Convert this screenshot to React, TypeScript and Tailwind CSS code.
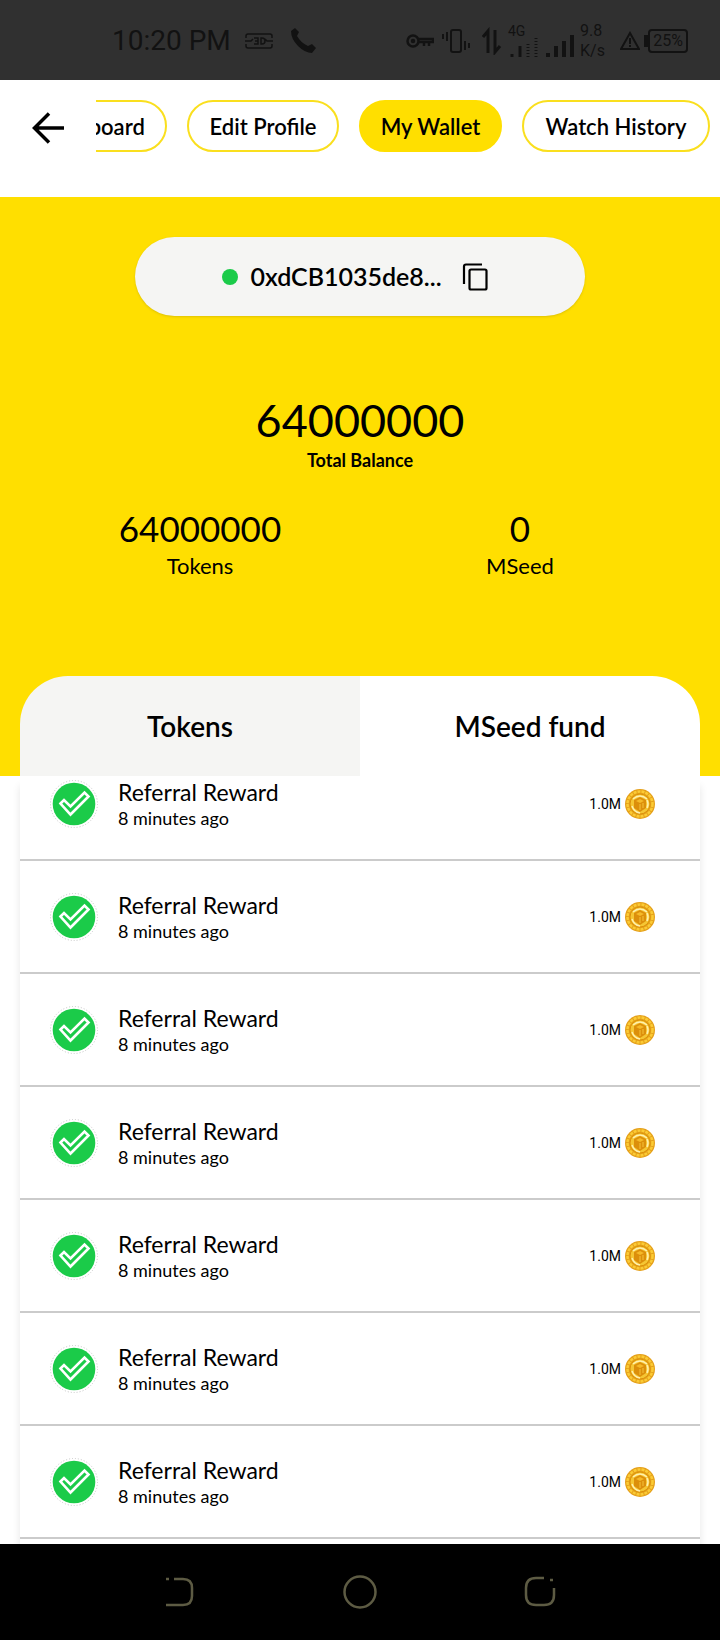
import { ReactNode } from "react";

const pills = [
  { label: "Dashboard", width: "w-[150px]" },
  { label: "Edit Profile", width: "w-[152px]" },
  { label: "My Wallet", width: "w-[143px]", active: true },
  { label: "Watch History", width: "w-[188px]" },
];

const rewards = Array.from({ length: 7 }, (_, id) => ({
  id,
  title: "Referral Reward",
  time: "8 minutes ago",
  amount: "1.0M",
}));

const StatusBar = () => (
  <div className="flex h-20 shrink-0 items-center bg-[#303030] pt-0.5 pr-8 pl-28 font-[Roboto,sans-serif] text-[#121212]">
    <span className="text-[28px] leading-8">10:20 PM</span>
    <svg className="ml-3.5 h-4 w-7" viewBox="0 0 28 16" fill="none" stroke="currentColor" strokeWidth="1.5">
      <path d="M1 5V3q0-2 2-2h22q2 0 2 2v2M1 11v2q0 2 2 2h22q2 0 2-2v-2M0 8h6l2-2M28 8h-6l-2-2M9 5h4v6H9M10 8h3M16 5v6h1q3 0 3-3t-3-3z" />
    </svg>
    <svg className="ml-4 h-7 w-7" viewBox="0 0 28 28" fill="currentColor">
      <path d="M2 4 6 1l4 4-2 4q4 7 11 10l4-2 4 4-4 5Q16 26 9 19 2 12 2 4z" />
    </svg>
    <div className="ml-auto flex items-center">
      <svg className="h-4 w-7" viewBox="0 0 28 16" fill="none" stroke="currentColor" strokeWidth="2.5">
        <circle cx="7" cy="8" r="5.5" />
        <circle cx="7" cy="8" r="1" />
        <path d="M12 6h15v3H13M18 9v4M23 9v4" />
      </svg>
      <svg className="ml-2 h-7 w-7" viewBox="0 0 28 28" fill="none" stroke="currentColor" strokeWidth="2">
        <rect x="9" y="3" width="10" height="22" rx="2" />
        <path d="M5 5v9M1 7v5M23 14v9M27 16v5" />
      </svg>
      <svg className="ml-3 h-7 w-5" viewBox="0 0 20 28" fill="none" stroke="currentColor" strokeWidth="3">
        <path d="M6 26V4L1 10M13 3v22l5-6" />
      </svg>
      <div className="ml-1.5 flex items-end">
        <div className="w-8">
          <span className="block text-sm leading-3">4G</span>
          <svg className="h-5 w-8" viewBox="0 0 32 20" fill="none" stroke="currentColor" strokeWidth="3">
            <path d="M4 20v-3M12 20V9" />
            <path d="M20 20V5M28 20V1" strokeDasharray="1 2" />
          </svg>
        </div>
        <svg className="ml-1 h-6 w-8" viewBox="0 0 32 24" fill="none" stroke="currentColor" strokeWidth="4">
          <path d="M4 24v-4M12 24V13M20 24V8M28 24V2" />
        </svg>
      </div>
      <div className="ml-1 w-7 text-base leading-5">
        <span className="block">9.8</span>
        <span className="block">K/s</span>
      </div>
      <svg className="ml-3 h-5 w-5" viewBox="0 0 20 20" fill="none" stroke="currentColor" strokeWidth="2">
        <path d="M10 2 1 18h18zM10 7v6M10 14v2" />
      </svg>
      <span className="ml-1 h-3 w-1 bg-current" />
      <span className="flex h-6 w-10 items-center justify-center rounded border-2 border-current text-base">25%</span>
    </div>
  </div>
);

const CheckBadge = () => (
  <svg className="h-12 w-12 shrink-0" viewBox="0 0 48 48" fill="none">
    <circle cx="24" cy="24" r="23.5" fill="#fff" stroke="#c4c4c4" strokeDasharray="1 2" />
    <circle cx="24" cy="24" r="21.3" fill="#1bcb49" />
    <path d="m10.5 23.5 3.5-3.5 6.5 6.5 14-14 4 4-18 18z" stroke="#fff" strokeWidth="2.6" />
  </svg>
);

const Coin = () => (
  <svg className="h-[30px] w-[30px] shrink-0" viewBox="0 0 30 30" fill="none">
    <circle cx="15" cy="15" r="15" fill="#e5a01a" />
    <circle cx="15" cy="15" r="12.5" stroke="#fbcb35" strokeWidth="2.5" strokeDasharray="3 1" />
    <circle cx="15" cy="15" r="10" fill="#f5c634" stroke="#dc9209" />
    <path d="M8 10q7-6 14 0M7 17q2 6 8 7M22 11q2 4 0 8" stroke="#fff0b0" strokeWidth="1.5" />
    <path d="m15 8 6 3v8l-6 4-6-4v-8z" fill="#dc8f0b" />
    <path d="m11 12 4-2 4 2-4 2z" fill="#f5b929" />
    <path d="M15 15v6M18 14v5" stroke="#f5c33b" />
  </svg>
);

const Stat = ({ value, label }: { value: string; label: string }) => (
  <div className="flex w-80 flex-col items-center">
    <span className="text-[35px] leading-10">{value}</span>
    <span className="text-[22px] leading-9">{label}</span>
  </div>
);

const RewardItem = ({ title, time, children }: { title: string; time: string; children: ReactNode }) => (
  <li className="flex h-[113px] items-center border-b-2 border-[#cbcbcb] pr-[45px] pl-[30px]">
    <CheckBadge />
    <div className="ml-5 flex flex-col">
      <span className="text-[23px] leading-7">{title}</span>
      <span className="text-[18px] leading-6">{time}</span>
    </div>
    {children}
  </li>
);

const App = () => {
  return (
    <div className="flex h-screen flex-col overflow-hidden bg-white font-[Lato,sans-serif] text-black">
      <StatusBar />
      <header className="flex h-[117px] shrink-0 items-start pt-5">
        <button aria-label="Back" className="flex h-14 w-24 shrink-0 items-center justify-center">
          <svg className="h-8 w-8" viewBox="0 0 32 32" fill="none" stroke="currentColor" strokeWidth="3.5">
            <path d="M32 16H3M17 1.5 2.5 16 17 30.5" />
          </svg>
        </button>
        <nav className="flex min-w-0 flex-1 justify-end gap-5 overflow-hidden pr-2.5">
          {pills.map((pill) => (
            <button
              key={pill.label}
              className={`h-[52px] shrink-0 rounded-full border-2 text-[22px] font-semibold ${pill.width} ${pill.active ? "border-[#ffdf00] bg-[#ffdf00]" : "border-[#fadf1e] bg-white"}`}
            >
              {pill.label}
            </button>
          ))}
        </nav>
      </header>

      <section className="flex shrink-0 flex-col items-center bg-[#ffdf00] px-5 pt-10">
        <div className="flex h-[79px] w-full max-w-[450px] items-center justify-center rounded-full bg-[#f5f5f3] pr-2 shadow-sm">
          <span className="h-4 w-4 rounded-full bg-[#1bcb49]" />
          <span className="ml-3 text-[25px] font-semibold">0xdCB1035de8...</span>
          <button aria-label="Copy address" className="ml-5">
            <svg className="h-7 w-7" viewBox="0 0 28 28" fill="none" stroke="currentColor" strokeWidth="2.2">
              <path d="M20 1.5H4q-2 0-2 2V21" />
              <rect x="7.5" y="6.5" width="17" height="20" rx="1.5" />
            </svg>
          </button>
        </div>
        <div className="mt-20 flex flex-col items-center">
          <span className="text-[45px] leading-[48px]">64000000</span>
          <span className="text-[18px] leading-8 font-bold">Total Balance</span>
        </div>
        <div className="mt-8 flex w-full justify-center">
          <Stat value="64000000" label="Tokens" />
          <Stat value="0" label="MSeed" />
        </div>
        <div className="mt-23 flex h-[100px] w-full overflow-hidden rounded-t-[48px] text-[28px] font-semibold">
          <button className="flex-1 bg-[#f5f5f3]">Tokens</button>
          <button className="flex-1 bg-white">MSeed fund</button>
        </div>
      </section>

      <main className="mx-5 min-h-0 flex-1 overflow-hidden bg-white shadow-[0_10px_8px_rgba(0,0,0,0.1)]">
        <ul className="-mt-7">
          {rewards.map((reward) => (
            <RewardItem key={reward.id} title={reward.title} time={reward.time}>
              <span className="mr-1 ml-auto font-[Roboto,sans-serif] text-sm">{reward.amount}</span>
              <Coin />
            </RewardItem>
          ))}
        </ul>
      </main>

      <footer className="flex h-24 shrink-0 items-center justify-center bg-black text-[#5d5b43]">
        <button aria-label="Back" className="flex w-[180px] justify-center">
          <svg className="h-8 w-8" viewBox="0 0 32 32" fill="none" stroke="currentColor" strokeWidth="2.5">
            <path d="M2 3h3M10 3h9q9 0 9 9v8q0 9-9 9H2" />
          </svg>
        </button>
        <button aria-label="Home" className="flex w-[180px] justify-center">
          <svg className="h-9 w-9" viewBox="0 0 36 36" fill="none" stroke="currentColor" strokeWidth="2.5">
            <circle cx="18" cy="18" r="15.5" />
          </svg>
        </button>
        <button aria-label="Recent apps" className="flex w-[180px] justify-center">
          <svg className="h-8 w-8" viewBox="0 0 32 32" fill="none" stroke="currentColor" strokeWidth="2.5">
            <path d="M20 2h-8Q2 2 2 12v7q0 10 10 10h8q10 0 10-10v-7M26 4h3" />
          </svg>
        </button>
      </footer>
    </div>
  );
};

export default App;
